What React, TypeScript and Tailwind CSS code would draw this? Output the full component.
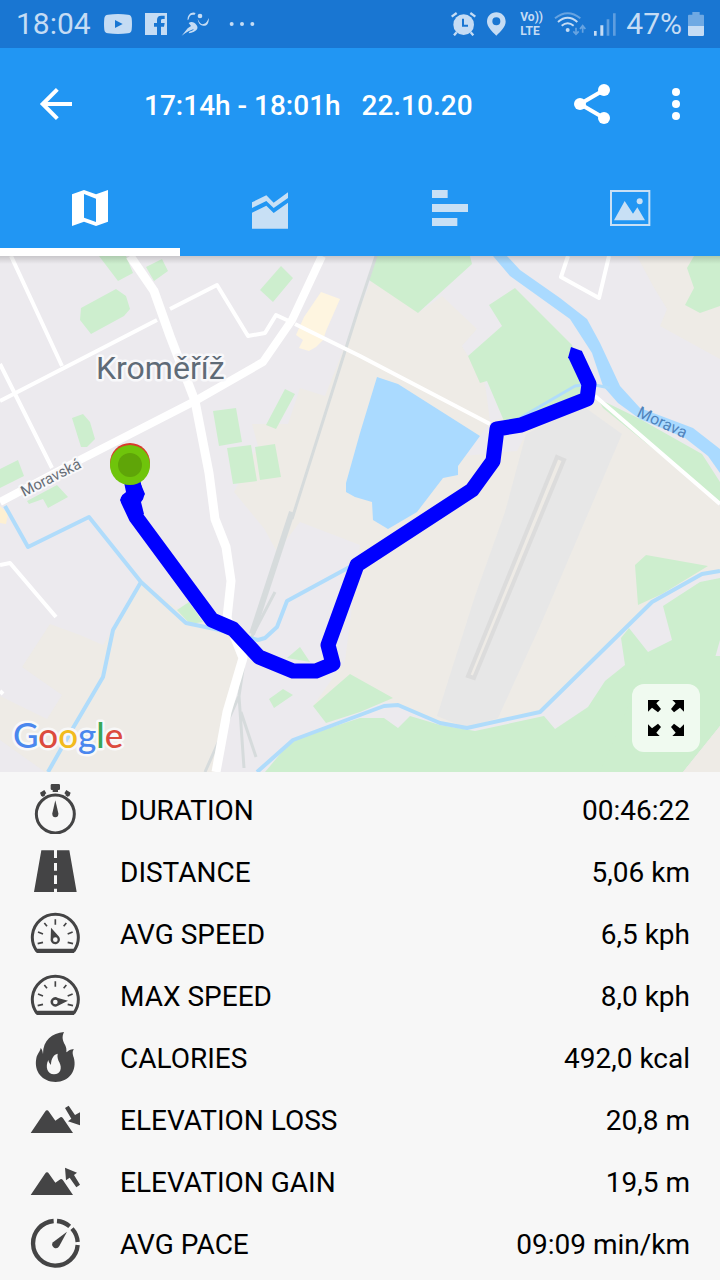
import { useState } from 'react';
import type { ReactNode } from 'react';

type TabId = 'map' | 'chart' | 'laps' | 'photos';

const tabs: { id: TabId; label: string; icon: ReactNode }[] = [
  {
    id: 'map',
    label: 'Map',
    icon: (
      <path
        fillRule="evenodd"
        d="M18 31 54 18 90 31 126 18V113L90 126 54 113 18 126ZM54 30V101L90 114V44Z"
      />
    ),
  },
  {
    id: 'chart',
    label: 'Chart',
    icon: (
      <path d="M18 55 61 34 83 56 126 25V42L83 72 61 51 18 72ZM18 86 61 65 83 87 126 56V134H18Z" />
    ),
  },
  {
    id: 'laps',
    label: 'Laps',
    icon: <path d="M18 18H65V42H18ZM18 60H126V84H18ZM18 102H94V126H18Z" />,
  },
  {
    id: 'photos',
    label: 'Photos',
    icon: (
      <>
        <rect x="15" y="21" width="115" height="102" fill="none" stroke="currentColor" strokeWidth="6" />
        <path d="M24 109 56 51 81 89 94 70 117 109Z" />
        <circle cx="101" cy="52" r="9" />
      </>
    ),
  },
];

// Dial shared by the two speed icons, only the needle differs
function Dial({ children }: { children: ReactNode }) {
  return (
    <>
      <path d="M19 127A69 69 0 1 1 133 127Z" fill="none" stroke="currentColor" strokeWidth="9" />
      <path d="M13 123H139L132 135H20Z" />
      <path
        d="M76 34V50M43 45 51 55M109 45 101 55M24 72 39 78M128 72 113 78M23 107 39 103M129 107 113 103"
        stroke="currentColor"
        strokeWidth="5"
      />
      {children}
    </>
  );
}

const mountains = <path d="M2 117 45 53Q51 45 57 53L76 80 89 71Q94 66 99 73L129 117Z" />;

const stats: { label: string; value: string; icon: ReactNode }[] = [
  {
    label: 'DURATION',
    value: '00:46:22',
    icon: (
      <>
        <circle cx="76" cy="90" r="57" fill="none" stroke="currentColor" strokeWidth="9" />
        <path d="M66 0H86Q90 0 90 4V14Q90 18 86 18H84V24H68V18H66Q62 18 62 14V4Q62 0 66 0Z" />
        <path d="M30 26 43 18 49 28 45 31 46 34 38 39 36 36 34 37Z" />
        <path d="M122 26 109 18 103 28 107 31 106 34 114 39 116 36 118 37Z" />
        <path d="M76 49 85 88Q86 100 76 100 66 100 67 88Z" />
      </>
    ),
  },
  {
    label: 'DISTANCE',
    value: '5,06 km',
    icon: (
      <path
        fillRule="evenodd"
        d="M34 13H118L140 138H12ZM72 13V36H81V13ZM72 51V74H81V51ZM72 88V114H81V88ZM72 128V138H81V128Z"
      />
    ),
  },
  {
    label: 'AVG SPEED',
    value: '6,5 kph',
    icon: (
      <Dial>
        <path fillRule="evenodd" d="M63 59 86 85A14 14 0 1 1 62 92ZM76 88A7 7 0 1 0 76 102 7 7 0 1 0 76 88Z" />
      </Dial>
    ),
  },
  {
    label: 'MAX SPEED',
    value: '8,0 kph',
    icon: (
      <Dial>
        <path fillRule="evenodd" d="M114 92 84 84A14 14 0 1 0 84 107ZM76 89A7 7 0 1 0 76 103 7 7 0 1 0 76 89Z" />
      </Dial>
    ),
  },
  {
    label: 'CALORIES',
    value: '492,0 kcal',
    icon: (
      <path
        fillRule="evenodd"
        d="M102 0C94 16 99 28 105 38 109 46 110 53 109 61 115 58 119 49 132 52 126 58 128 67 131 76 143 117 116 150 77 150 37 150 11 119 19 79 22 64 30 60 32 48 37 53 38 60 39 66 39 24 66 3 102 0ZM83 65C72 67 63 79 63 99 59 94 56 91 55 84 45 104 52 127 72 127 92 127 97 108 88 91 84 83 81 75 83 65Z"
      />
    ),
  },
  {
    label: 'ELEVATION LOSS',
    value: '20,8 m',
    icon: (
      <>
        {mountains}
        <path d="M105 42 116 35 135 63 150 55V94L114 82 124 74Z" />
      </>
    ),
  },
  {
    label: 'ELEVATION GAIN',
    value: '19,5 m',
    icon: (
      <>
        {mountains}
        <path d="M105 35 141 50 132 57 150 86 139 94 119 65 108 73Z" />
      </>
    ),
  },
  {
    label: 'AVG PACE',
    value: '09:09 min/km',
    icon: (
      <>
        <path
          d="M81 9A67 67 0 0 1 119 25M126 32A67 67 0 0 1 143 72M143 81A67 67 0 1 1 71 9"
          fill="none"
          stroke="currentColor"
          strokeWidth="13"
        />
        <path d="M111 41 88 84Q82 94 72 89 62 82 69 73Z" />
      </>
    ),
  },
];

export default function App() {
  const [activeTab, setActiveTab] = useState<TabId>('map');

  return (
    <div className="min-h-screen bg-[#f7f7f7] font-['Roboto',sans-serif]">
      <StatusBar />

      <header className="bg-[#2196f3] text-white">
        <div className="flex h-28 items-center pl-8 pr-5">
          <button type="button" aria-label="Back">
            <svg viewBox="0 0 144 144" className="size-12" fill="none" stroke="currentColor" strokeWidth="12">
              <path d="M120 72H32M76 28 32 72 76 116" />
            </svg>
          </button>
          <h1 className="ml-16 flex-1 whitespace-pre pt-1 text-[28px] font-medium leading-8">
            {'17:14h - 18:01h   22.10.20'}
          </h1>
          <div className="flex gap-9">
            <button type="button" aria-label="Share">
              <svg viewBox="0 0 144 144" className="size-12" fill="currentColor">
                <path d="M108 30 36 72 108 114" fill="none" stroke="currentColor" strokeWidth="12" />
                <circle cx="108" cy="30" r="18" />
                <circle cx="36" cy="72" r="18" />
                <circle cx="108" cy="114" r="18" />
              </svg>
            </button>
            <button type="button" aria-label="More options">
              <svg viewBox="0 0 144 144" className="size-12" fill="currentColor">
                <circle cx="72" cy="36" r="12" />
                <circle cx="72" cy="72" r="12" />
                <circle cx="72" cy="108" r="12" />
              </svg>
            </button>
          </div>
        </div>

        <div role="tablist" className="grid h-24 grid-cols-4">
          {tabs.map((tab) => (
            <button
              key={tab.id}
              type="button"
              role="tab"
              aria-label={tab.label}
              aria-selected={activeTab === tab.id}
              onClick={() => setActiveTab(tab.id)}
              className={`flex items-center justify-center border-y-8 border-t-transparent ${
                activeTab === tab.id ? 'border-b-white text-white' : 'border-b-transparent text-[#c8e0f5]'
              }`}
            >
              <svg viewBox="0 0 144 144" className="size-12" fill="currentColor">
                {tab.icon}
              </svg>
            </button>
          ))}
        </div>
      </header>

      <main>
        <section className="relative">
          <RouteMap />
          <div className="absolute inset-x-0 top-0 h-2 bg-linear-to-b from-black/15 to-transparent" />
          <button
            type="button"
            aria-label="Full screen"
            className="absolute bottom-5 right-5 flex size-[68px] items-center justify-center rounded-xl bg-white/70 text-black"
          >
            <svg viewBox="0 0 108 108" className="size-9" fill="currentColor">
              <path d="M0 0H35L25 10 39 27 30 37 12 23 0 35Z" />
              <path d="M108 0H73L83 10 69 27 78 37 96 23 108 35Z" />
              <path d="M0 108H35L25 98 39 81 30 71 12 85 0 73Z" />
              <path d="M108 108H73L83 98 69 81 78 71 96 85 108 73Z" />
            </svg>
          </button>
        </section>

        <dl className="px-[30px] pt-[6px] text-[28px] leading-8 text-black">
          {stats.map((stat) => (
            <div key={stat.label} className="flex h-[62px] items-center">
              <dt className="flex items-center gap-10">
                <svg viewBox="0 0 150 150" className="size-[50px] text-[#444445]" fill="currentColor">
                  {stat.icon}
                </svg>
                <span className="pt-1">{stat.label}</span>
              </dt>
              <dd className="ml-auto pt-1">{stat.value}</dd>
            </div>
          ))}
        </dl>
      </main>
    </div>
  );
}

function StatusBar() {
  return (
    <div className="flex h-12 items-center justify-between bg-[#1976d2] px-4 text-[#c5dcf4]">
      <div className="flex items-center">
        <span className="text-[30px] leading-9">18:04</span>
        <svg viewBox="0 0 84 60" className="ml-[13px] h-5 w-7" fill="currentColor">
          <path
            fillRule="evenodd"
            d="M12 2Q42-2 72 2 82 3 83 13 85 30 83 47 82 57 72 58 42 62 12 58 2 57 1 47-1 30 1 13 2 3 12 2ZM33 18V42L56 30Z"
          />
        </svg>
        <svg viewBox="0 0 66 66" className="ml-[13px] size-[22px]" fill="currentColor">
          <path d="M0 0H66V66H48V41H57L59 30H48V22Q48 18 53 18H59V8H49Q36 8 36 21V30H27V41H36V66H0Z" />
        </svg>
        <svg viewBox="0 0 84 72" className="ml-3.5 h-6 w-7" fill="currentColor">
          <circle cx="57" cy="12" r="7" />
          <path d="M20 25C18 8 32-3 44 3L40 9C31 7 25 11 23 22Z" />
          <path d="M50 20C55 34 63 38 68 36 76 34 80 27 83 18 85 33 76 44 66 41 56 39 51 31 50 20Z" />
          <path d="M23 33C31 28 40 30 47 40 54 50 46 60 23 64L25 59C33 57 38 54 38 51 30 54 16 60 2 71L20 49 30 42Z" />
        </svg>
        <svg viewBox="0 0 78 12" className="ml-5 h-1 w-[26px]" fill="currentColor">
          <circle cx="8" cy="6" r="6" />
          <circle cx="39" cy="6" r="6" />
          <circle cx="70" cy="6" r="6" />
        </svg>
      </div>

      <div className="flex items-center">
        {/* alarm */}
        <svg viewBox="0 0 75 72" className="h-6 w-[25px]" fill="none" stroke="currentColor">
          <circle cx="38" cy="38" r="31" fill="currentColor" stroke="none" />
          <path d="M2 14 17 3M58 3 73 14M17 61 9 70M59 61 67 70" strokeWidth="7" />
          <path d="M36 20V41H51" stroke="#1976d2" strokeWidth="6" />
        </svg>
        {/* location */}
        <svg viewBox="0 0 57 72" className="ml-[11px] h-6 w-[19px]" fill="currentColor">
          <path
            fillRule="evenodd"
            d="M28 1C44 1 56 13 56 29 56 44 41 58 28 71 15 58 0 44 0 29 0 13 12 1 28 1ZM28 16A12 12 0 1 0 28 40 12 12 0 1 0 28 16Z"
          />
        </svg>
        <p className="ml-3.5 w-6 text-[12px] font-bold leading-[14px]">
          Vo))
          <br />
          LTE
        </p>
        {/* wifi with traffic arrows */}
        <svg viewBox="0 0 96 72" className="ml-2.5 h-6 w-8" fill="none" stroke="currentColor" strokeWidth="6">
          <path d="M3 19Q41-12 79 19" opacity=".45" />
          <path d="M12 30Q41 5 70 30M23 41Q41 27 59 41" />
          <circle cx="41" cy="54" r="6" fill="currentColor" stroke="none" />
          <path d="M66 47V66M58 58 66 67 74 58M86 62V42M78 51 86 41 94 51" opacity=".45" strokeWidth="5" />
        </svg>
        {/* signal strength */}
        <svg viewBox="0 0 66 72" className="ml-2 h-6 w-[22px]" fill="currentColor">
          <path d="M0 57H8V71H0ZM19 40H28V71H19Z" />
          <path d="M38 22H46V71H38ZM57 4H65V71H57Z" opacity=".4" />
        </svg>
        <span className="ml-2.5 text-[30px] leading-9">47%</span>
        <svg viewBox="0 0 48 72" className="ml-1.5 h-6 w-4" fill="currentColor">
          <path d="M13 0H35V8H45Q48 8 48 11V42H0V11Q0 8 3 8H13Z" opacity=".5" />
          <path d="M0 42H48V68Q48 72 44 72H4Q0 72 0 68Z" />
        </svg>
      </div>
    </div>
  );
}

function RouteMap() {
  return (
    <svg viewBox="0 0 720 516" className="block h-auto w-full" role="img" aria-label="Route map of Kroměříž">
      <rect width="720" height="516" fill="#eceaee" />

      {/* fields */}
      <g fill="#eeebe6">
        <path d="M372 22 418 57 442 40 477 73 462 90 487 130 490 165 600 143 720 250V315L702 318 652 346 540 456 467 472 440 467 398 449 345 432 313 450 345 405 360 289 300 266 277 296 260 265 267 276 234 236 258 190 252 168 288 168 300 132 325 140Z" />
        <path d="M637 0 653 30 667 53 660 70 720 103V0Z" />
        <path d="M50 368 22 411 62 439 47 463 0 440V484L45 516H217L245 396 233 373 183 356 140 326 113 373 103 389 80 379Z" />
      </g>
      <path d="M477 73 462 90 485 127 490 165 502 70Z" fill="#eceaee" />
      <path d="M490 165 526 178 517 195 462 200 455 198 430 230 405 258 452 210 458 200 480 180Z" fill="#eceaee" />

      {/* airfield */}
      <path d="M526 178 583 150 622 178 540 370 498 462 467 472 437 460 475 340 505 256Z" fill="#e7e7e7" />
      <path d="M557 201 564 204 474 422 468 420Z" fill="#eeebe6" stroke="#dcdcdc" strokeWidth="4" />

      {/* parks and woods */}
      <g fill="#cdeece">
        <path d="M99 0 118 25 133 17 126 0ZM146 11 162 3 168 15 154 25ZM81 52 116 33 126 40 130 53 124 60 91 78 80 64ZM281 10 293 22 273 46 260 34ZM213 155 236 152 242 186 219 190ZM227 192 251 189 257 225 233 228ZM255 191 275 188 281 221 260 224ZM285 133 295 138 276 173 266 169ZM72 162 83 158 90 166 95 183 87 191 81 191ZM0 213 18 204 24 220 0 232ZM27 245 57 229 68 241 48 252 43 243 29 248Z" />
        <path d="M375 0H470L472 8 418 57 369 24ZM489 49 515 32 572 89 590 137 507 172 487 125 480 127 468 100 502 70ZM694 0H720V50L700 57 685 49 694 32 687 12ZM597 142 640 163 702 198 720 226V247L603 152Z" />
        <path d="M177 354 189 346 203 366 190 368ZM287 402 300 391 310 406ZM269 443 283 433 293 439 274 452ZM313 450 350 418 393 442 360 456 326 467Z" />
        <path d="M635 309 646 299 708 310 662 338 638 349ZM720 322V384L683 516H265L292 484 360 462 384 462 398 472 410 460 440 469 475 475 544 460 555 473 588 451 605 425 625 409 621 382 629 372 648 396 672 384 663 350 700 326Z" />
        <path d="M650 400H720V470L683 516H600Z" />
      </g>
      <path d="M720 470V516H683Z" fill="#eeebe6" />
      <path d="M321 36 340 43 326 75 323 84 316 91 309 95 299 92 303 84 296 79 304 61Z" fill="#fef5e0" />
      <path d="M0 250 8 258 6 268 0 267Z" fill="#fdf0d2" />

      {/* railway */}
      <g fill="none" stroke="#d6dbdc">
        <path d="M376 0 358 54 292 263" strokeWidth="3" />
        <path d="M292 256 252 378" strokeWidth="6" />
        <path d="M275 336 250 384M248 380 239 440 205 516M239 440 244 512M241 456 256 501" strokeWidth="3" />
      </g>

      {/* water */}
      <g fill="#aadaff">
        <path d="M377 121 398 128 480 180 458 210V219L443 222 417 256 388 273 373 264 372 246 355 241 346 236V227L360 177Z" />
        <path d="M493 0 510 20 570 63 592 97 603 130 618 147 640 163 685 182 708 200 720 217V193L693 172 640 152 620 130 600 87 587 63 560 42 520 14 507 0Z" />
      </g>
      <g fill="none" stroke="#b0dcfb" strokeWidth="4" strokeLinejoin="round">
        <path d="M5 250 28 291 89 261 141 326 186 367 215 373 258 384 265 382 277 371 287 345 357 307" />
        <path d="M141 326 113 374 103 421 73 472 48 516" />
        <path d="M257 516 293 484 360 459 384 450 398 449 440 467 467 472 540 456 652 346 702 318 720 315" />
        <path d="M520 162 575 130 590 128 610 132" strokeWidth="3" />
      </g>

      {/* streets */}
      <g fill="none" stroke="#fff" strokeLinejoin="round">
        <path
          d="M11 0 62 110M0 108 52 212M0 145 157 64M170 53 217 29 248 80 265 77 276 59 291 66M295 68 360 100 490 168M595 140 720 248M568 0 561 21 599 42 609 0M0 309 10 307 56 361M0 435 3 438"
          strokeWidth="4"
        />
        <path
          d="M130 0 154 35 170 80 195 145 209 217 215 263 226 291 231 325 227 362 243 402 227 456 216 516"
          strokeWidth="9"
        />
        <path d="M0 246 70 209 195 145 263 106 292 64 322 0" strokeWidth="8" />
      </g>

      {/* labels */}
      <g stroke="#f8f8fa" strokeLinejoin="round" paintOrder="stroke">
        <text x="96" y="123" fontSize="32" fill="#5f6b77" strokeWidth="5">
          Kroměříž
        </text>
        <text transform="translate(24 241) rotate(-27)" fontSize="15" fill="#666c75" strokeWidth="4">
          Moravská
        </text>
        <text transform="translate(636 160) rotate(25)" fontSize="16" fill="#5083bb" stroke="none">
          Morava
        </text>
      </g>

      {/* recorded route */}
      <path
        d="M132 222 136 240 128 244 136 261 212 364 233 373 259 401 293 415H316L333 408 328 389 357 309 472 234 493 205 497 173 521 169 587 143 589 128 575 98"
        fill="none"
        stroke="#00f"
        strokeWidth="15"
        strokeLinejoin="round"
      />
      <path d="M568 102 571 91 582 95V98L575 104Z" fill="#00f" />
      <path d="M124 226H140L145 238 141 246 144 258 134 264 120 244 126 236Z" fill="#00f" />
      <circle cx="130" cy="207" r="20" fill="#d93a2b" />
      <circle cx="130" cy="209" r="20" fill="#6fc40b" />
      <circle cx="130" cy="209" r="12" fill="#5fa508" />

      <text
        x="13"
        y="492"
        fontSize="35"
        fontFamily="Lato, sans-serif"
        fontWeight="500"
        stroke="#f8f8f8"
        strokeWidth="5"
        strokeLinejoin="round"
        paintOrder="stroke"
      >
        <tspan fill="#4a87ee">G</tspan>
        <tspan fill="#dc4b3e">o</tspan>
        <tspan fill="#f2bb1d">o</tspan>
        <tspan fill="#4a87ee">g</tspan>
        <tspan fill="#3aa757">l</tspan>
        <tspan fill="#dc4b3e">e</tspan>
      </text>
    </svg>
  );
}
